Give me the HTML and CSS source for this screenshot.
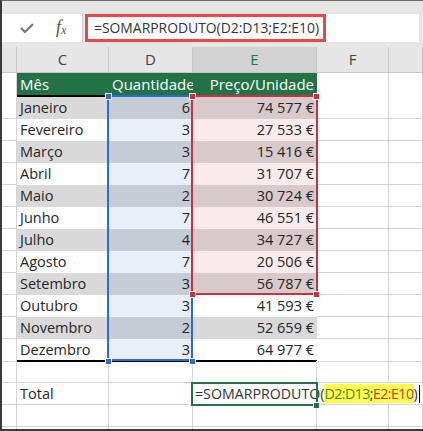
FILE: index.html
```html
<!DOCTYPE html>
<html lang="pt">
<head>
    <meta charset="UTF-8">
    <title>SOMARPRODUTO</title>
    <link rel="stylesheet" href="styles.css">
</head>
<body>
    <div class="frame">
        <div class="topband"></div>

        <div class="fbar">
            <div class="fbar-tools">
                <svg class="check" width="14" height="10" viewBox="0 0 14 10">
                    <polyline points="1,5 5,9 13,1" fill="none" stroke="#777" stroke-width="2.2"/>
                </svg>
                <span class="fx">f<sub>x</sub></span>
            </div>
            <div class="fbar-input">=SOMARPRODUTO(D2:D13;E2:E10)</div>
            <div class="fbar-rest"></div>
        </div>

        <div class="sheet">
            <div class="row colhead">
                <div class="c"></div>
                <div class="c">C</div>
                <div class="c">D</div>
                <div class="c on">E</div>
                <div class="c">F</div>
                <div class="c"></div>
            </div>

            <div class="row thead">
                <div class="c"></div>
                <div class="t h left">Mês</div>
                <div class="t h">Quantidade</div>
                <div class="t h">Preço/Unidade</div>
                <div class="c"></div>
                <div class="c"></div>
            </div>

            <div class="row">
                <div class="c"></div>
                <div class="t left g">Janeiro</div>
                <div class="t bg">6</div>
                <div class="t rg">74 577 €</div>
                <div class="c"></div><div class="c"></div>
            </div>
            <div class="row">
                <div class="c"></div>
                <div class="t left">Fevereiro</div>
                <div class="t bw">3</div>
                <div class="t rw">27 533 €</div>
                <div class="c"></div><div class="c"></div>
            </div>
            <div class="row">
                <div class="c"></div>
                <div class="t left g">Março</div>
                <div class="t bg">3</div>
                <div class="t rg">15 416 €</div>
                <div class="c"></div><div class="c"></div>
            </div>
            <div class="row">
                <div class="c"></div>
                <div class="t left">Abril</div>
                <div class="t bw">7</div>
                <div class="t rw">31 707 €</div>
                <div class="c"></div><div class="c"></div>
            </div>
            <div class="row">
                <div class="c"></div>
                <div class="t left g">Maio</div>
                <div class="t bg">2</div>
                <div class="t rg">30 724 €</div>
                <div class="c"></div><div class="c"></div>
            </div>
            <div class="row">
                <div class="c"></div>
                <div class="t left">Junho</div>
                <div class="t bw">7</div>
                <div class="t rw">46 551 €</div>
                <div class="c"></div><div class="c"></div>
            </div>
            <div class="row">
                <div class="c"></div>
                <div class="t left g">Julho</div>
                <div class="t bg">4</div>
                <div class="t rg">34 727 €</div>
                <div class="c"></div><div class="c"></div>
            </div>
            <div class="row">
                <div class="c"></div>
                <div class="t left">Agosto</div>
                <div class="t bw">7</div>
                <div class="t rw">20 506 €</div>
                <div class="c"></div><div class="c"></div>
            </div>
            <div class="row">
                <div class="c"></div>
                <div class="t left g">Setembro</div>
                <div class="t bg">3</div>
                <div class="t rg">56 787 €</div>
                <div class="c"></div><div class="c"></div>
            </div>
            <div class="row">
                <div class="c"></div>
                <div class="t left">Outubro</div>
                <div class="t bw">3</div>
                <div class="t">41 593 €</div>
                <div class="c"></div><div class="c"></div>
            </div>
            <div class="row">
                <div class="c"></div>
                <div class="t left g">Novembro</div>
                <div class="t bg">2</div>
                <div class="t g">52 659 €</div>
                <div class="c"></div><div class="c"></div>
            </div>
            <div class="row last">
                <div class="c"></div>
                <div class="t left">Dezembro</div>
                <div class="t bw">3</div>
                <div class="t">64 977 €</div>
                <div class="c"></div><div class="c"></div>
            </div>

            <div class="row">
                <div class="c"></div><div class="c"></div><div class="c"></div>
                <div class="c"></div><div class="c"></div><div class="c"></div>
            </div>
            <div class="row">
                <div class="c"></div>
                <div class="c left">Total</div>
                <div class="c"></div>
                <div class="c edit"><span class="formula">=SOMARPRODUTO(<span class="hl"><span class="ref-d">D2:D13</span>;<span class="ref-e">E2:E10</span></span>)<span class="caret"></span></span></div>
                <div class="c nogrid"></div>
                <div class="c nogrid"></div>
            </div>
            <div class="row">
                <div class="c"></div><div class="c"></div><div class="c"></div>
                <div class="c"></div><div class="c"></div><div class="c"></div>
            </div>
            <div class="row">
                <div class="c"></div><div class="c"></div><div class="c"></div>
                <div class="c"></div><div class="c"></div><div class="c"></div>
            </div>

            <!-- range outlines drawn over the grid -->
            <div class="range blue"></div>
            <div class="range red"></div>
            <div class="range active"></div>

            <div class="handle hb" style="left:103px; top:46px"></div>
            <div class="handle hb" style="left:103px; top:311px"></div>
            <div class="handle hb" style="left:187px; top:311px"></div>
            <div class="handle hr" style="left:187px; top:46px"></div>
            <div class="handle hr" style="left:311px; top:46px"></div>
            <div class="handle hr" style="left:187px; top:244px"></div>
            <div class="handle hr" style="left:311px; top:244px"></div>
            <div class="handle hg" style="left:311px; top:355px"></div>
        </div>
    </div>
</body>
</html>
```

FILE: styles.css
```css
body {
    margin: 0;
    background: #fff;
    font-family: "Open Sans", "Noto Sans", sans-serif;
}
.frame {
    width: 423px;
    height: 431px;
    box-sizing: border-box;
    border-top: 1px solid #6a6a6a;
    border-left: 2px solid #3a3a3a;
    border-bottom: 2px solid #3a3a3a;
    background: #e6e6e6;
    overflow: hidden;
}
.topband {
    height: 13px;
}

/* formula bar */
.fbar {
    display: flex;
    height: 28px;
    margin-bottom: 5px;
}
.fbar-tools {
    width: 80px;
    background: #fff;
    border-right: 1px solid #d0d0d0;
    display: flex;
    align-items: center;
}
.check {
    margin-left: 18px;
}
.fx {
    margin-left: 22px;
    font-family: "Liberation Serif", serif;
    font-style: italic;
    font-size: 18px;
    line-height: 18px;
    color: #555;
}
.fx sub {
    font-size: 12px;
    vertical-align: -1px;
}
.fbar-input {
    margin-left: 2px;
    width: 241px;
    box-sizing: border-box;
    border: 3px solid #e8474b;
    background: #fff;
    padding-left: 6px;
    font-size: 13.9px;
    line-height: 22px;
    color: #333;
    white-space: nowrap;
}
.fbar-rest {
    width: 93px;
    background: #fff;
}

/* grid */
.sheet {
    position: relative;
    background: #fff;
    height: 400px;
}
.row {
    display: grid;
    grid-template-columns: 15px 92px 84px 124px 72px 1fr;
    height: 22px;
    font-size: 14.5px;
    line-height: 21px;
    color: #262626;
}
.c,
.t {
    box-sizing: border-box;
    padding: 0 3px;
    text-align: right;
    white-space: nowrap;
}
.c {
    border-right: 1px solid #d4d4d4;
    border-bottom: 1px solid #d4d4d4;
}
.left {
    text-align: left;
}

.colhead {
    height: 26px;
    background: #e6e6e6;
    line-height: 25px;
    font-size: 15px;
    color: #444;
}
.colhead .c {
    text-align: center;
    border-color: #c6c6c6;
}
.colhead .on {
    background: #d2d2d2;
    color: #217346;
}

.thead {
    height: 24px;
}
.thead .h {
    background: #217346;
    color: #fff;
    font-size: 15px;
    line-height: 22px;
    border-bottom: 2px solid #000;
}
.thead .c {
    border-bottom: 0;
}

.g  { background: #d9d9d9; }
.bg { background: #c6ccd5; }
.bw { background: #e9eff8; }
.rg { background: #d8c9ca; }
.rw { background: #f9eaeb; }

.last .t {
    border-bottom: 2px solid #000;
}

.edit {
    border-right: 0;
    padding-left: 2px;
    text-align: left;
    overflow: visible;
}
.nogrid {
    border-right: 0;
}
.formula {
    font-size: 14.2px;
    color: #333;
}
.hl {
    background: #ffff4f;
    letter-spacing: -0.55px;
}
.ref-d {
    color: #4b8a1c;
}
.ref-e {
    color: #d2381f;
}
.caret {
    display: inline-block;
    width: 1px;
    height: 18px;
    margin-left: 1px;
    vertical-align: -4px;
    background: #000;
}

/* selection overlays */
.range {
    position: absolute;
    box-sizing: border-box;
    border: 2px solid;
}
.blue {
    left: 105px;
    top: 48px;
    width: 86px;
    height: 266px;
    border-color: #2e6bd1;
}
.red {
    left: 189px;
    top: 48px;
    width: 127px;
    height: 200px;
    border-color: #c8323f;
}
.active {
    left: 189px;
    top: 335px;
    width: 127px;
    height: 24px;
    border-color: #217346;
}
.handle {
    position: absolute;
    width: 5px;
    height: 5px;
    border: 1px solid #fff;
}
.hb { background: #2e6bd1; }
.hr { background: #c8323f; }
.hg { background: #217346; }
```
